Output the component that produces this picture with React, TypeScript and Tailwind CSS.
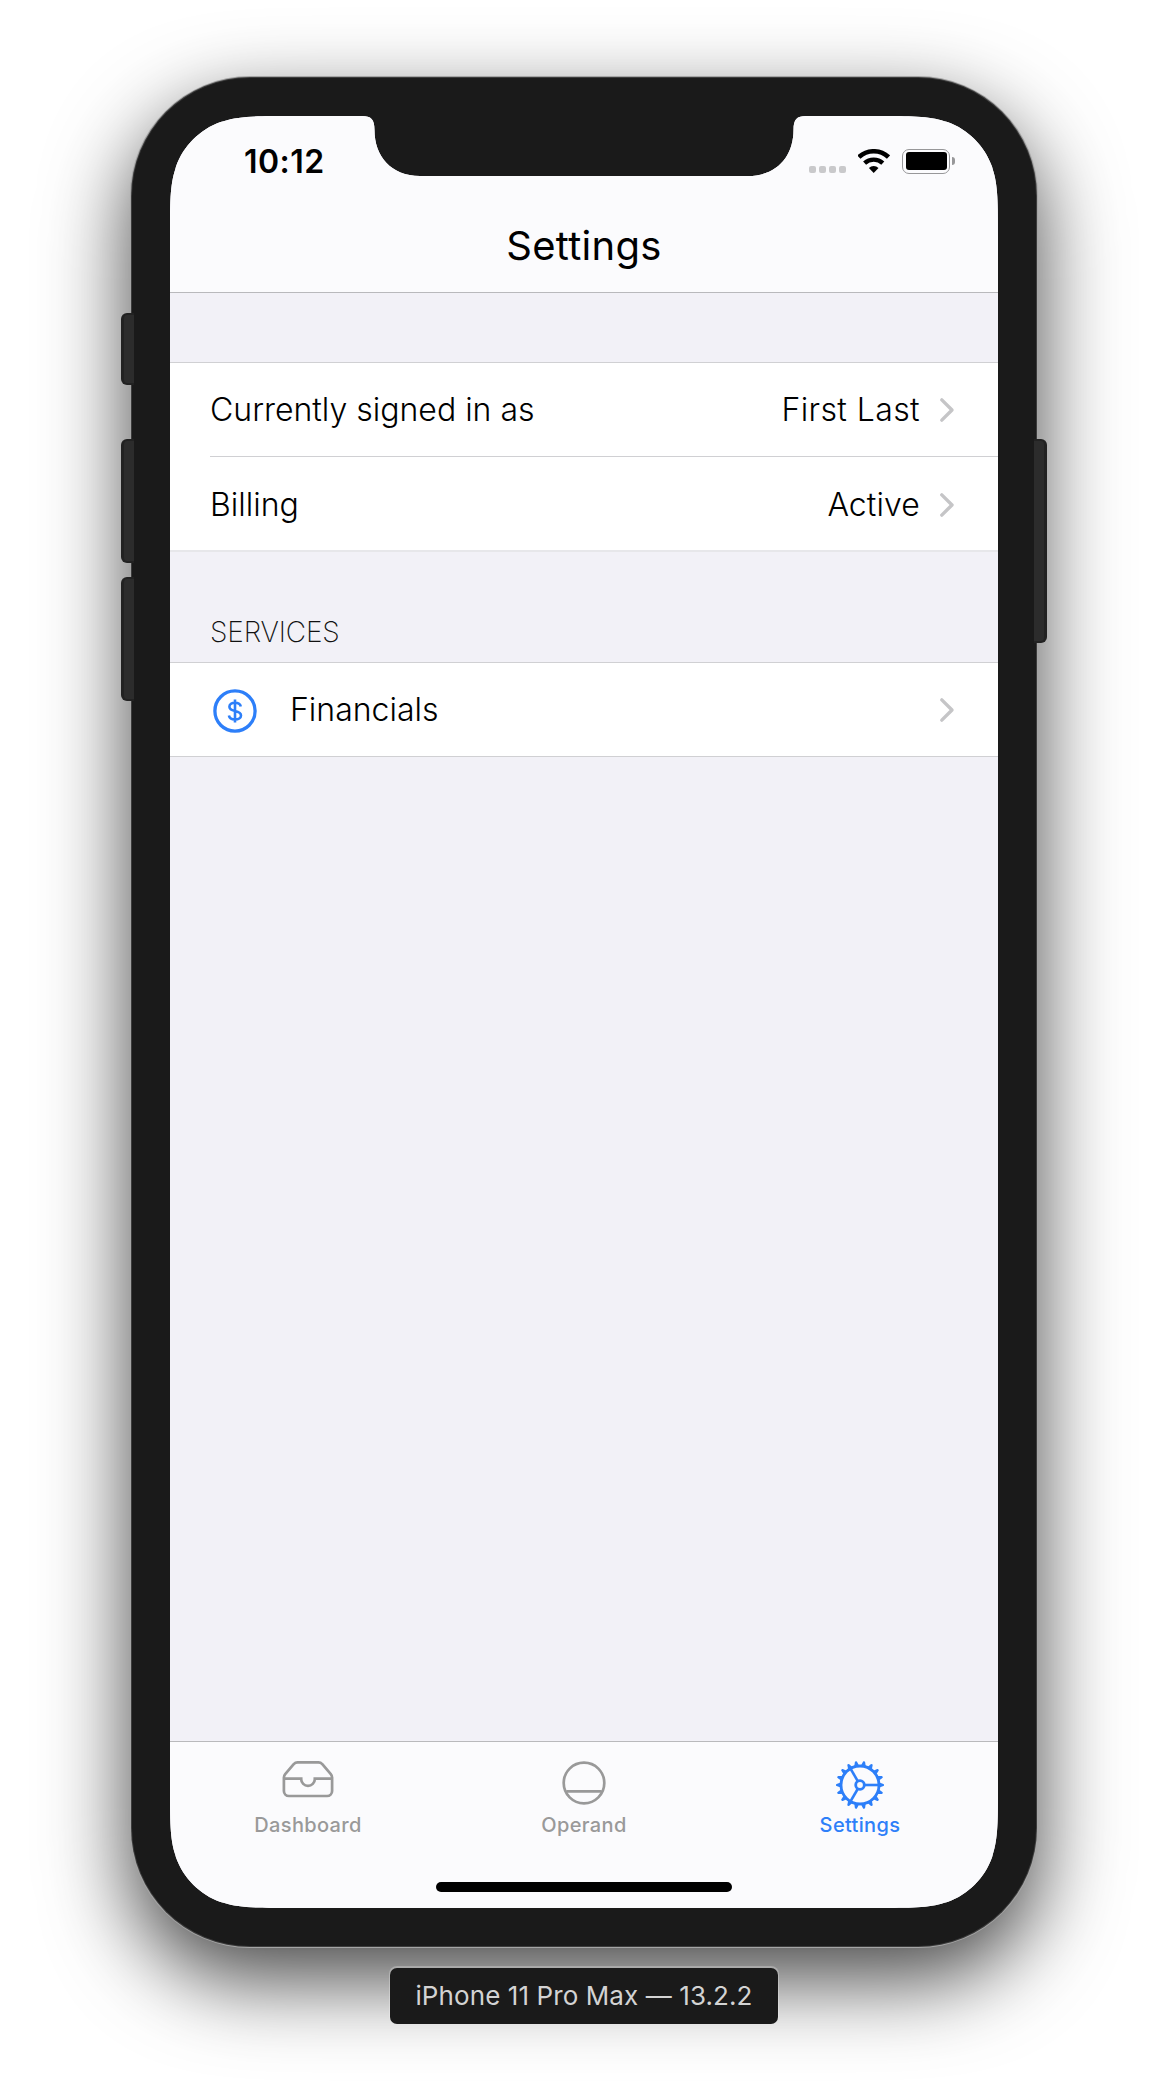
import React from "react";

function WifiIcon() {
  return (
    <svg width="32" height="24" viewBox="0 0 32 24" fill="none" stroke="#000">
      <path d="M.9 8.1a21.7 21.7 0 0 1 29.6 0" strokeWidth="4.6" />
      <path d="M6.6 14.2a13.4 13.4 0 0 1 18.2 0" strokeWidth="4.4" />
      <path d="M15.7 24 10.9 19a7 7 0 0 1 9.6 0z" fill="#000" stroke="none" />
    </svg>
  );
}

function BatteryIcon() {
  return (
    <div className="flex items-center">
      <div className="flex h-[25px] w-[48px] rounded-[7px] border-[1.5px] border-[#979799] p-[2.5px]">
        <div className="h-full w-full rounded-[3px] bg-black" />
      </div>
      <div className="ml-[2px] h-[8px] w-[3px] rounded-r-full bg-[#979799]" />
    </div>
  );
}

function Chevron() {
  return (
    <svg width="16" height="26" viewBox="0 0 16 26" fill="none" stroke="#c5c5c7" strokeWidth="3.4" strokeLinecap="round" strokeLinejoin="round">
      <path d="M2.8 2.9 13 13 2.8 23.1" />
    </svg>
  );
}

function DollarCircle() {
  return (
    <svg width="44" height="44" viewBox="-22 -22 44 44" fill="none" stroke="#2d7ff9">
      <circle r="20.1" strokeWidth="3.3" />
      <path
        d="M5.8-4.4C5.3-7 3-8.2 0-8.2c-3.3 0-5.6 1.6-5.6 4C-5.6-1.8-3.7-.8 0 0c3.9.9 6 1.9 6 4.4C6 7.1 3.5 8.4 0 8.4c-3.2 0-5.6-1.3-6.1-4M0-11.5v23"
        strokeWidth="2.6"
      />
    </svg>
  );
}

function TrayIcon() {
  return (
    <svg width="56" height="56" viewBox="0 0 56 56" fill="none" stroke="currentColor" strokeWidth="2.7" strokeLinejoin="round">
      <path d="M3.9 21V34a5 5 0 0 0 5 5H47.1a5 5 0 0 0 5-5V20.6c0-1.4-.4-2.4-1.3-3.5L42.3 7.2C41.2 6 40.2 5.4 38.4 5.4H17.6C15.8 5.4 14.8 6 13.7 7.2L5.2 17.1c-.9 1.1-1.3 2.1-1.3 3.5z" />
      <path d="M4 21.6H21.2v.6a6.8 6.6 0 0 0 13.6 0v-.6H52" strokeLinejoin="miter" />
    </svg>
  );
}

function OperandIcon() {
  return (
    <svg width="56" height="56" viewBox="0 0 56 56" fill="none" stroke="currentColor" strokeWidth="2.7">
      <circle cx="28" cy="26" r="20.3" />
      <path d="M10.3 34.4h35.4" />
    </svg>
  );
}

const TEETH = Array.from({ length: 18 }, (_, i) => i * 20);

function GearIcon() {
  return (
    <svg width="56" height="56" viewBox="-28 -28 56 56" fill="none" stroke="currentColor" strokeWidth="2.8">
      <circle r="19" />
      <circle r="4.3" />
      {[0, 120, 240].map((a) => (
        <path key={a} d="M4.6 0H19" strokeWidth="2.6" transform={`rotate(${a})`} />
      ))}
      {TEETH.map((a) => (
        <path key={a} d="M19.4-2.4 23.4-1.1Q24-.9 24-.6V.6Q24 .9 23.4 1.1L19.4 2.4z" fill="currentColor" stroke="none" transform={`rotate(${a})`} />
      ))}
    </svg>
  );
}

function StatusBar() {
  return (
    <div className="flex h-[90px] items-center justify-between pl-[74px] pr-[43px]">
      <div className="pt-[2px] text-[32px] leading-[40px] font-semibold tracking-[0.45px]">10:12</div>
      <div className="flex items-center">
        <div className="mt-[17px] mr-[12px] flex gap-[3px]">
          {[0, 1, 2, 3].map((i) => (
            <div key={i} className="size-[7px] rounded-[2px] bg-[#c9c9cb]" />
          ))}
        </div>
        <WifiIcon />
        <div className="ml-[12px]">
          <BatteryIcon />
        </div>
      </div>
    </div>
  );
}

function Tab({ icon, label, color }: { icon: React.ReactNode; label: string; color: string }) {
  return (
    <div className={`flex w-[276px] flex-col items-center pt-[15px] ${color}`}>
      {icon}
      <div className="-mt-px text-[20px] leading-[26px] font-medium tracking-[0.35px]">{label}</div>
    </div>
  );
}

export default function App() {
  return (
    <div className="flex h-[2096px] w-[1168px] flex-col items-center overflow-hidden bg-white pt-[78px] font-['Inter',sans-serif] text-black">
      <div className="relative h-[1868px] w-[904px] rounded-[118px] bg-[#1a1a1a] p-[38px] shadow-[0_0_0_1px_#3c3c3c,0_0_0_2px_#a5a5a5,0_32px_84px_2px_rgba(0,0,0,0.72)]">
        <div className="absolute top-[235px] -left-[11px] h-[72px] w-[13px] rounded-l-[6px] border-y-2 border-l-3 border-[#222] bg-[#2c2c2c]" />
        <div className="absolute top-[361px] -left-[11px] h-[124px] w-[13px] rounded-l-[6px] border-y-2 border-l-3 border-[#222] bg-[#2c2c2c]" />
        <div className="absolute top-[499px] -left-[11px] h-[124px] w-[13px] rounded-l-[6px] border-y-2 border-l-3 border-[#222] bg-[#2c2c2c]" />
        <div className="absolute top-[361px] -right-[11px] h-[204px] w-[13px] rounded-r-[6px] border-y-2 border-r-3 border-[#222] bg-[#2c2c2c]" />

        <div className="flex h-[1792px] w-[828px] flex-col bg-[#f2f1f7] [clip-path:path('M122.3_0L192_0C201_0_204.5_3_204.5_14C204.5_40_221_60_250_60L578_60C607_60_623.5_40_623.5_14C623.5_3_627_0_636_0L705.7_0C740.9_0_758.5_0_774.4_5.2L777.5_6C798.2_13.5_814.5_29.8_822_50.5L822.8_53.6C828_69.5_828_87.1_828_122.3L828_1669.7C828_1704.9_828_1722.5_822.8_1738.4L822_1741.5C814.5_1762.2_798.2_1778.5_777.5_1786L774.4_1786.8C758.5_1792_740.9_1792_705.7_1792L122.3_1792C87.1_1792_69.5_1792_53.6_1786.8L50.5_1786C29.8_1778.5_13.5_1762.2_6_1741.5L5.2_1738.4C0_1722.5_0_1704.9_0_1669.7L0_122.3C0_87.1_0_69.5_5.2_53.6L6_50.5C13.5_29.8_29.8_13.5_50.5_6L53.6_5.2C69.5_0_87.1_0_122.3_0Z')]">
          <header className="h-[177px] border-b border-[#b9b9bc] bg-[#fbfbfd]">
            <StatusBar />
            <h1 className="pt-[16px] text-center text-[40px] leading-[48px] font-normal tracking-[0.3px]">Settings</h1>
          </header>

          <section className="mt-[69px] border-t border-b-2 border-t-[#d0d0d3] border-b-[#e7e7ea] bg-white">
            <div className="flex h-[93px] items-center pr-[43px] pl-[40px] text-[32px] leading-[40px] font-light">
              <span className="flex-1">Currently signed in as</span>
              <span className="mr-[19px] tracking-[0.4px]">First Last</span>
              <Chevron />
            </div>
            <div className="ml-[40px] h-px bg-[#d0d0d3]" />
            <div className="flex h-[93px] items-center pt-[2px] pr-[43px] pl-[40px] text-[32px] leading-[40px] font-light">
              <span className="flex-1">Billing</span>
              <span className="mr-[19px] tracking-[0.1px]">Active</span>
              <Chevron />
            </div>
          </section>

          <h2 className="flex h-[110px] items-end pb-[12px] pl-[40px] text-[28px] leading-[36px] font-extralight tracking-[-0.15px] text-[#111]">
            SERVICES
          </h2>

          <section className="border-y border-[#d0d0d3] bg-white">
            <div className="flex h-[93px] items-center pr-[43px] pl-[43px] text-[32px] leading-[40px] font-light">
              <div className="mt-[2px]">
                <DollarCircle />
              </div>
              <span className="ml-[33px] flex-1 pt-px">Financials</span>
              <Chevron />
            </div>
          </section>

          <nav className="mt-auto h-[167px] border-t border-[#b9b9bc] bg-[#fbfbfd]">
            <div className="flex h-[140px]">
              <Tab icon={<TrayIcon />} label="Dashboard" color="text-[#999999]" />
              <Tab icon={<OperandIcon />} label="Operand" color="text-[#999999]" />
              <Tab icon={<GearIcon />} label="Settings" color="text-[#2d7ff9]" />
            </div>
            <div className="mx-auto h-[10px] w-[296px] rounded-full bg-black" />
          </nav>
        </div>
      </div>

      <div className="relative mt-[22px] flex h-[56px] w-[388px] items-center justify-center rounded-[7px] bg-[#1a1a1a] text-[26px] leading-[32px] tracking-[0.09px] text-[#d3d3d3] shadow-[0_-1px_0_1px_rgba(255,255,255,0.25)]">
        iPhone 11 Pro Max — 13.2.2
      </div>
    </div>
  );
}
